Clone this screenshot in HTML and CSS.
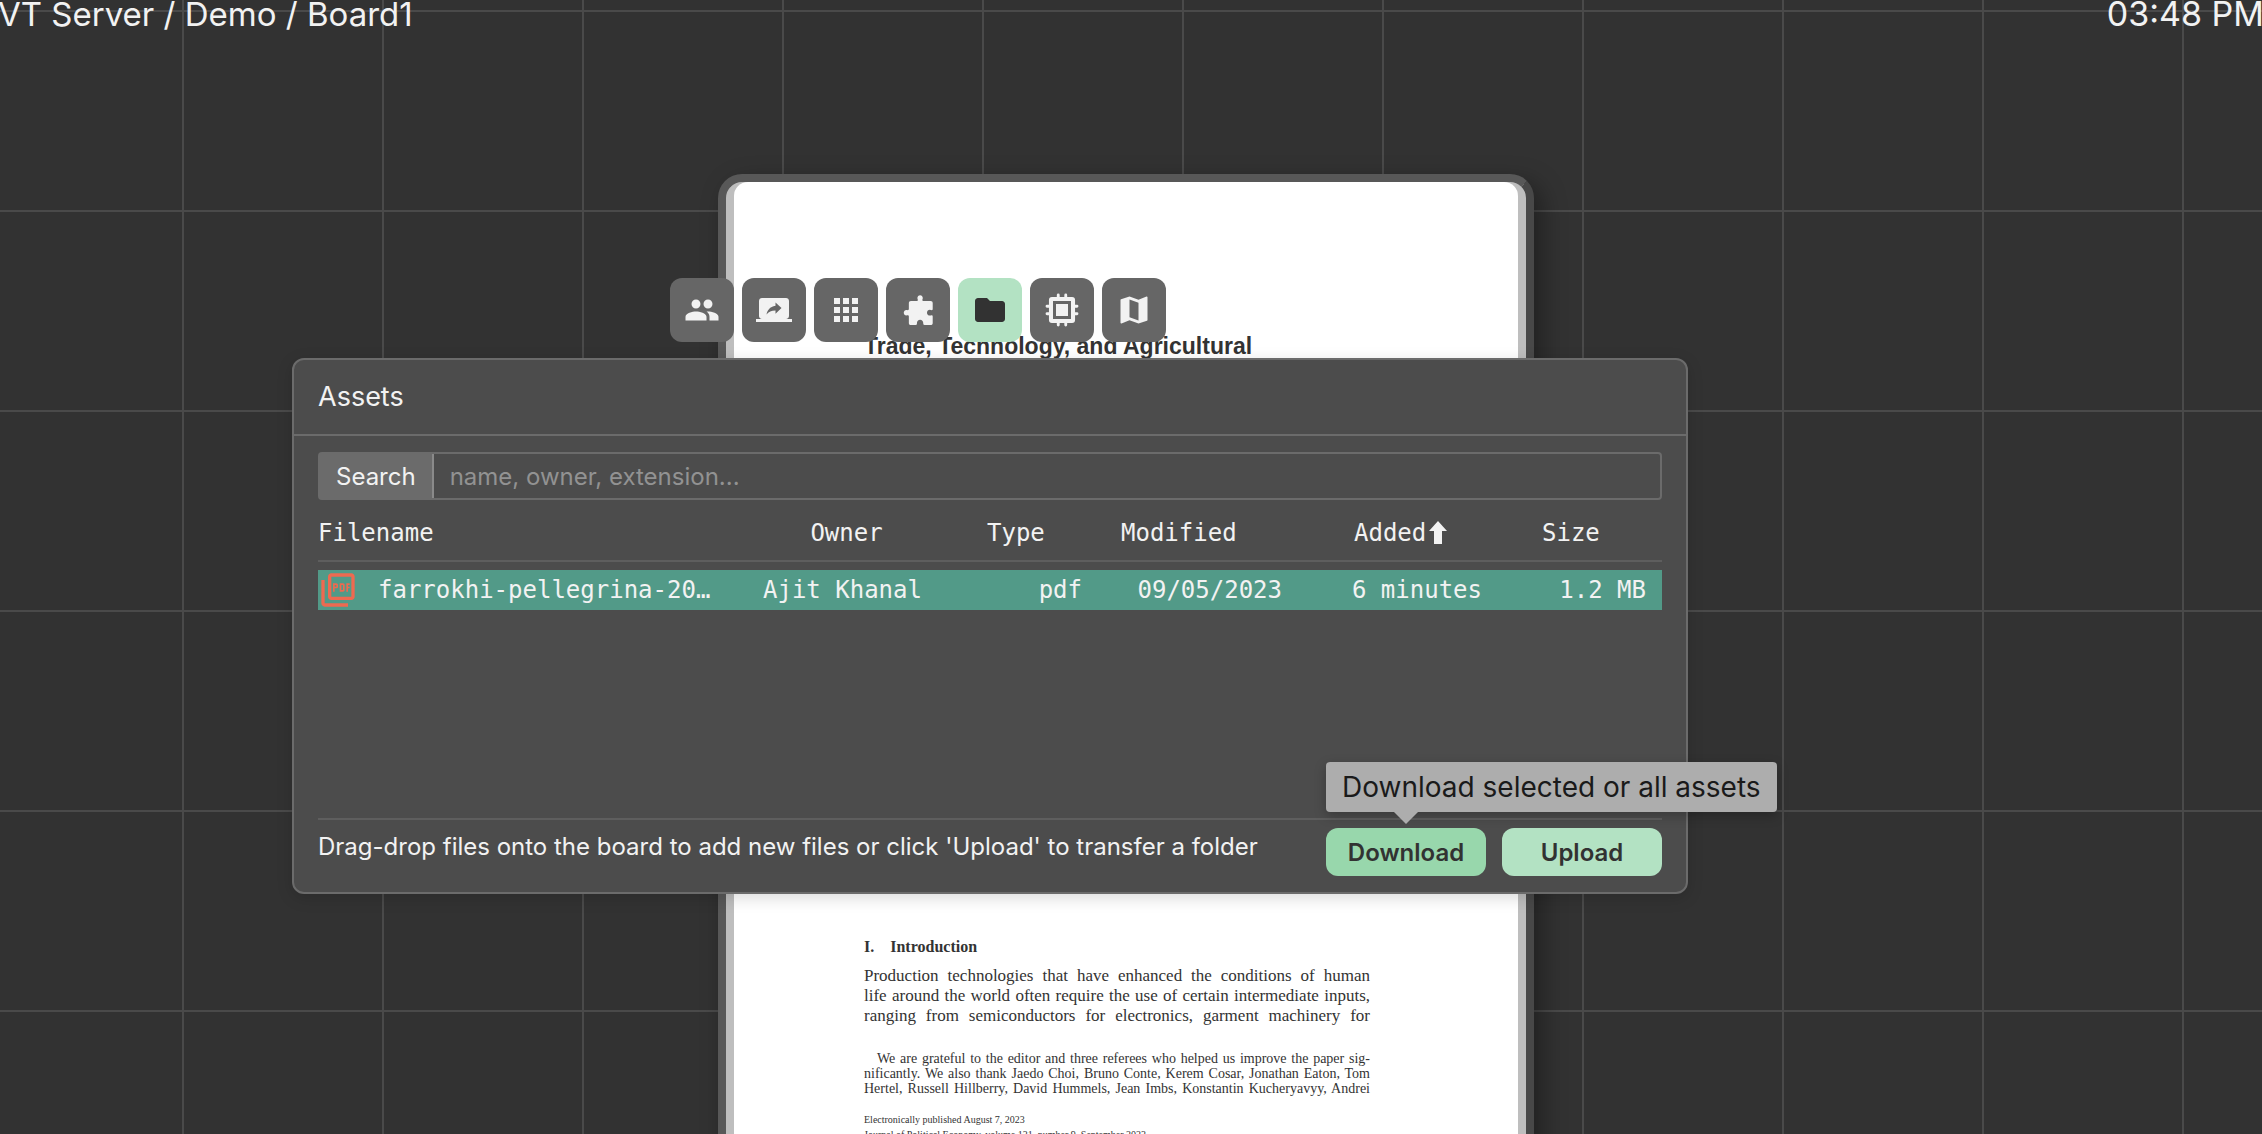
FILE: index.html
```html
<!DOCTYPE html>
<html lang="en">
<head>
<meta charset="utf-8">
<title>Board1</title>
<link rel="stylesheet" href="styles.css">
</head>
<body>
<main class="board">
  <header class="topbar">
    <span class="crumbs">VT Server / Demo / Board1</span>
    <time class="clock">03:48 PM</time>
  </header>

  <article class="viewer">
    <div class="page">
      <h1 class="page-title">Trade, Technology, and Agricultural</h1>
      <section class="page-body">
        <h2 class="section-title"><span>I.</span><span>Introduction</span></h2>
        <p class="prose">
          <span class="line">Production technologies that have enhanced the conditions of human</span>
          <span class="line">life around the world often require the use of certain intermediate inputs,</span>
          <span class="line">ranging from semiconductors for electronics, garment machinery for</span>
        </p>
        <p class="thanks">
          <span class="line line-indent">We are grateful to the editor and three referees who helped us improve the paper sig-</span>
          <span class="line">nificantly. We also thank Jaedo Choi, Bruno Conte, Kerem Cosar, Jonathan Eaton, Tom</span>
          <span class="line">Hertel, Russell Hillberry, David Hummels, Jean Imbs, Konstantin Kucheryavyy, Andrei</span>
        </p>
        <p class="imprint">Electronically published August 7, 2023</p>
        <p class="imprint">Journal of Political Economy, volume 131, number 9, September 2023.</p>
      </section>
    </div>
  </article>

  <nav class="toolbar" aria-label="Board tools">
    <button class="tool" aria-label="Users"><svg viewBox="0 0 24 24"><path d="M16 11c1.66 0 2.99-1.34 2.99-3S17.66 5 16 5c-1.66 0-3 1.34-3 3s1.34 3 3 3zm-8 0c1.66 0 2.99-1.34 2.99-3S9.66 5 8 5C6.34 5 5 6.34 5 8s1.34 3 3 3zm0 2c-2.33 0-7 1.17-7 3.5V19h14v-2.5c0-2.33-4.67-3.5-7-3.5zm8 0c-.29 0-.62.02-.97.05 1.16.84 1.97 1.97 1.97 3.45V19h6v-2.5c0-2.33-4.67-3.5-7-3.5z"/></svg></button>
    <button class="tool" aria-label="Screenshare"><svg viewBox="0 0 24 24"><path d="M20 18c1.1 0 1.99-.9 1.99-2L22 6c0-1.11-.9-2-2-2H4c-1.11 0-2 .89-2 2v10c0 1.1.89 2 2 2H0v2h24v-2h-4zm-7-3.53v-2.19c-2.78 0-4.61.85-6 2.72.56-2.67 2.11-5.33 6-5.87V7l4 3.73-4 3.74z"/></svg></button>
    <button class="tool" aria-label="Applications"><svg viewBox="0 0 24 24"><path d="M4 8h4V4H4v4zm6 12h4v-4h-4v4zm-6 0h4v-4H4v4zm0-6h4v-4H4v4zm6 0h4v-4h-4v4zm6-10v4h4V4h-4zm-6 4h4V4h-4v4zm6 6h4v-4h-4v4zm0 6h4v-4h-4v4z"/></svg></button>
    <button class="tool" aria-label="Plugins"><svg viewBox="0 0 24 24"><path d="M13.4 2.2C14.4 2.200 15.200 3 15.200 4C15.200 4.600 14.900 4.900 14.900 5.300C14.900 5.800 15.200 6 15.700 6H20.400C21.300 6 21.800 6.500 21.800 7.400V11.300C21.800 11.800 21.500 12.100 21.100 12.100C20.700 12.100 20.400 11.900 19.900 11.900C18.800 11.900 18 12.700 18 13.800S18.800 15.700 19.900 15.700C20.400 15.700 20.700 15.500 21.100 15.500C21.500 15.500 21.800 15.800 21.800 16.300V20.600C21.800 21.500 21.300 22 20.400 22H16.300C15.800 22 15.500 21.700 15.500 21.200V20.600C15.500 19.400 14.600 18.500 13.400 18.500S11.300 19.400 11.300 20.600V21.200C11.300 21.700 11 22 10.500 22H7.300C6.400 22 5.900 21.500 5.900 20.600V16.400C5.900 15.900 5.700 15.500 5.200 15.500C4.800 15.500 4.600 15.600 4.200 15.600C3.300 15.600 2.500 14.800 2.500 13.800S3.300 12 4.200 12C4.600 12 4.800 12.100 5.200 12.100C5.700 12.100 5.900 11.700 5.900 11.200V7.400C5.900 6.500 6.400 6 7.300 6H11.100C11.600 6 11.900 5.800 11.900 5.300C11.900 4.900 11.600 4.600 11.600 4C11.600 3 12.400 2.200 13.400 2.200Z"/></svg></button>
    <button class="tool tool-active" aria-label="Assets" aria-pressed="true"><svg viewBox="0 0 24 24"><path d="M10 4H4c-1.100 0-2 .9-2 2v12c0 1.100.9 2 2 2h16c1.100 0 2-.9 2-2V8c0-1.100-.9-2-2-2h-8l-2-2z"/></svg></button>
    <button class="tool" aria-label="Kernels"><svg viewBox="0 0 24 24"><path fill-rule="evenodd" d="M5.300 3.300h13.400a2 2 0 0 1 2 2v13.400a2 2 0 0 1-2 2H5.300a2 2 0 0 1-2-2V5.300a2 2 0 0 1 2-2zM6 6v12h12V6zM8 8h8v8H8z"/><path d="M9.500 2v20M14.500 2v20M2 9.500h20M2 14.500h20" fill="none" stroke="currentColor" stroke-width="1.900" stroke-linecap="round" stroke-dasharray="2 16 2 0"/></svg></button>
    <button class="tool" aria-label="Map"><svg viewBox="0 0 24 24"><path d="M20.5 3l-.16.03L15 5.1 9 3 3.36 4.9c-.21.07-.36.25-.36.48V20.5c0 .28.22.5.5.5l.16-.03L9 18.9l6 2.1 5.64-1.9c.21-.07.36-.25.36-.48V3.5c0-.28-.22-.5-.5-.5zM15 19l-6-2.11V5l6 2.11V19z"/></svg></button>
  </nav>

  <section class="panel" aria-labelledby="panel-title">
    <h2 class="panel-title" id="panel-title">Assets</h2>
    <div class="panel-body">
      <div class="search">
        <label class="search-label" for="search">Search</label>
        <input class="search-input" id="search" type="text" placeholder="name, owner, extension...">
      </div>
      <table class="assets">
        <thead>
          <tr>
            <th class="col-name">Filename</th>
            <th class="col-owner">Owner</th>
            <th class="col-type">Type</th>
            <th class="col-modified">Modified</th>
            <th class="col-added"><span class="sorted">Added<svg class="sort-icon" viewBox="0 0 18 24"><path d="M9 0l9 10h-5v13H5V10H0z"/></svg></span></th>
            <th class="col-size">Size</th>
          </tr>
        </thead>
        <tbody>
          <tr class="gap"><td colspan="6"></td></tr>
          <tr class="asset">
            <td class="cell-name"><span class="file"><svg class="file-icon" viewBox="0 0 24 24"><path d="M20 2H8c-1.100 0-2 .9-2 2v12c0 1.100.9 2 2 2h12c1.100 0 2-.9 2-2V4c0-1.100-.9-2-2-2zm0 14H8V4h12v12zM4 6H2v14c0 1.100.9 2 2 2h14v-2H4V6zm12 6V9c0-.55-.45-1-1-1h-2v5h2c.55 0 1-.45 1-1zm-2-3h1v3h-1V9zm4 2h1v-1h-1V9h1V8h-2v5h1v-2zm-8 0h1c.55 0 1-.45 1-1V9c0-.55-.45-1-1-1H9v5h1v-2zm0-2h1v1h-1V9z"/></svg>farrokhi-pellegrina-20…</span></td>
            <td class="cell-owner">Ajit Khanal</td>
            <td>pdf</td>
            <td>09/05/2023</td>
            <td>6 minutes</td>
            <td class="cell-size">1.2 MB</td>
          </tr>
        </tbody>
      </table>
      <footer class="panel-footer">
        <p class="hint">Drag-drop files onto the board to add new files or click 'Upload' to transfer a folder</p>
        <div class="download">
          <div class="tooltip" role="tooltip" id="download-tip">Download selected or all assets</div>
          <button class="action action-hover" aria-describedby="download-tip">Download</button>
        </div>
        <button class="action">Upload</button>
      </footer>
    </div>
  </section>
</main>
</body>
</html>
```
FILE: styles.css
```css
* { box-sizing: border-box; margin: 0; }

body {
  font-family: Inter, "Liberation Sans", sans-serif;
  color: #f2f2f2;
  background: #323232;
}

button, input { font: inherit; color: inherit; border: 0; }

.board {
  position: relative;
  height: 100vh;
  overflow: hidden;
  background-color: #323232;
  background-image:
    linear-gradient(to right, #4a4a4a 2px, transparent 2px),
    linear-gradient(to bottom, #4a4a4a 2px, transparent 2px);
  background-size: 200px 200px;
  background-position: 182px 10px;
}

.topbar {
  display: flex;
  justify-content: space-between;
  margin: -8px -2px 0;
  line-height: 44px;
}

.crumbs { font-size: 33px; }
.clock { font-size: 34px; }

/* Windows placed on the free canvas */
.viewer {
  position: absolute;
  left: 718px;
  top: 174px;
  width: 816px;
  height: 1100px;
  padding: 0 8px;
  border: 8px solid #585858;
  border-right-color: #484848;
  border-radius: 24px;
  background: #bebebe;
  box-shadow: 8px 8px 24px rgba(0, 0, 0, 0.35);
}

.page {
  height: 100%;
  padding: 150px 148px 0 130px;
  border-radius: 14px;
  background: #fff;
  color: #333;
}

.page-title {
  font: bold 23px/28px "Liberation Sans", sans-serif;
  white-space: nowrap;
}

.page-body {
  padding-top: 577px;
  font-family: "Liberation Serif", serif;
}

.section-title {
  display: flex;
  gap: 16px;
  font-size: 16px;
  line-height: 20px;
}

.line {
  display: block;
  text-align-last: justify;
  white-space: nowrap;
}

.prose {
  margin-top: 9px;
  font-size: 17px;
  line-height: 20px;
}

.thanks {
  margin-top: 25px;
  font-size: 14px;
  line-height: 15px;
}

.line-indent { padding-left: 13px; }

.imprint {
  margin-top: 16px;
  font-size: 10px;
  line-height: 15px;
}

.imprint + .imprint { margin-top: 0; }

.toolbar {
  position: absolute;
  left: 670px;
  top: 278px;
  display: flex;
  gap: 8px;
}

.tool {
  display: grid;
  place-items: center;
  width: 64px;
  height: 64px;
  padding: 0;
  border-radius: 12px;
  background: #666;
  color: #f2f2f2;
}

.tool-active { background: #b3e2c3; color: #323232; }

.tool svg { width: 36px; height: 36px; fill: currentColor; }

.panel {
  position: absolute;
  left: 292px;
  top: 358px;
  width: 1396px;
  border: 2px solid #6b6b6b;
  border-radius: 12px;
  background: #4c4c4c;
  box-shadow: 0 4px 16px rgba(0, 0, 0, 0.15);
}

.panel-title {
  padding: 0 24px;
  border-bottom: 2px solid #6b6b6b;
  font-size: 27px;
  font-weight: 400;
  line-height: 74px;
}

.panel-body { padding: 16px 24px; }

.search {
  display: flex;
  height: 48px;
  border: 2px solid #6b6b6b;
  border-radius: 4px;
  font-size: 24px;
}

.search-label {
  padding: 0 16px;
  border-right: 2px solid #8a8a8a;
  background: #6b6b6b;
  line-height: 46px;
}

.search-input { flex: 1; padding: 0 16px; background: none; }
.search-input::placeholder { color: #929292; opacity: 1; }

.assets {
  width: 100%;
  table-layout: fixed;
  border-collapse: separate;
  border-spacing: 0;
  font: 24px/40px "DejaVu Sans Mono", monospace;
  white-space: nowrap;
}

.assets th {
  height: 62px;
  padding: 0 0 0 24px;
  border-bottom: 2px solid #5e5e5e;
  font-weight: 400;
  line-height: 54px;
  text-align: left;
  vertical-align: bottom;
}

.assets .col-name { width: 445px; padding: 0; }
.assets .col-owner { width: 167px; padding: 0; text-align: center; }
.assets .col-type { width: 160px; padding-left: 57px; }
.assets .col-modified { width: 200px; padding-left: 31px; }
.assets .col-added { width: 200px; padding-left: 64px; }
.assets .col-size { padding-left: 52px; }

.sorted, .file { display: flex; align-items: center; }
.sort-icon { width: 18px; height: 24px; margin-left: 3px; fill: #f2f2f2; }

.gap td { height: 8px; padding: 0; }

.asset { background: #529a88; }
.asset td { height: 40px; padding: 0 8px; text-align: right; }
.asset .cell-name { padding: 0; }
.asset .cell-owner { padding: 0; text-align: left; }
.asset .cell-size { padding-right: 16px; }

.file { gap: 20px; }
.file-icon { width: 40px; height: 40px; fill: #ee6a50; }

.panel-footer {
  display: flex;
  gap: 16px;
  margin-top: 208px;
  padding-top: 8px;
  border-top: 2px solid #5e5e5e;
}

.hint { flex: 1; font-size: 24px; line-height: 38px; white-space: nowrap; }

.download { position: relative; }

.action {
  width: 160px;
  height: 48px;
  padding: 0;
  border-radius: 12px;
  background: #b3e2c3;
  color: #323232;
  font-size: 24px;
  font-weight: 600;
}

.action-hover { background: #98d7ac; }

.tooltip {
  position: absolute;
  left: 0;
  bottom: 64px;
  padding: 0 16px;
  border-radius: 4px;
  background: #adadad;
  color: #1a1a1a;
  font-size: 28px;
  font-weight: 400;
  line-height: 50px;
  white-space: nowrap;
  box-shadow: 0 4px 12px rgba(0, 0, 0, 0.25);
}

.tooltip::after {
  content: "";
  position: absolute;
  left: 68px;
  top: 100%;
  border: 12px solid transparent;
  border-top-color: #adadad;
  border-bottom: 0;
}
```
